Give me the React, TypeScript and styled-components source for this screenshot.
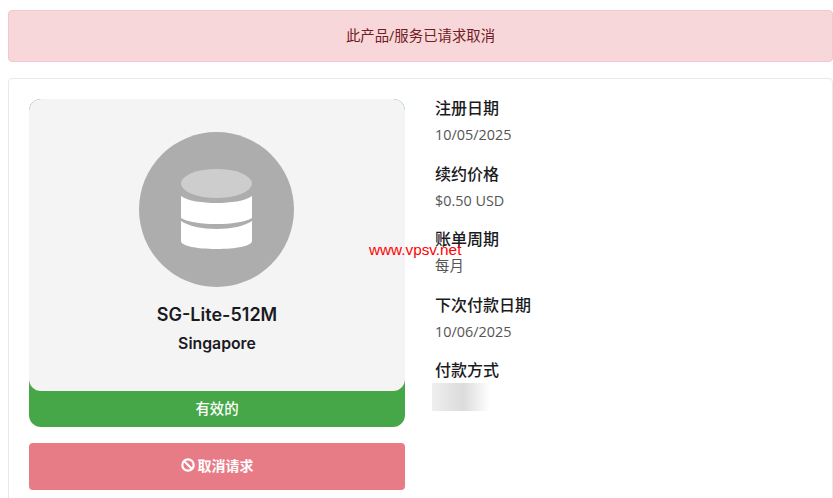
import React from "react";
import styled, { createGlobalStyle } from "styled-components";

const GlobalStyle = createGlobalStyle`
  html, body {
    margin: 0;
    padding: 0;
    background: #fff;
    overflow: hidden;
  }
  body {
    font-family: "Open Sans", "Noto Sans CJK SC", sans-serif;
  }
`;

const Page = styled.div`
  position: relative;
  width: 833px;
  height: 498px;
  padding: 10px 0 0 8px;
  box-sizing: border-box;
  overflow: hidden;
`;

const Alert = styled.div`
  width: 825px;
  height: 52px;
  box-sizing: border-box;
  margin-bottom: 16px;
  padding-bottom: 3px;
  display: flex;
  align-items: center;
  justify-content: center;
  background: #f8d7da;
  border: 1px solid #f5c6cb;
  border-radius: 4px;
  color: #721c24;
  font-size: 14.4px;
`;

const Card = styled.div`
  width: 825px;
  height: 440px;
  box-sizing: border-box;
  padding: 20px;
  display: grid;
  grid-template-columns: 376px 1fr;
  column-gap: 30px;
  align-items: start;
  border: 1px solid #e8e8e8;
  border-radius: 4px;
`;

const Side = styled.div`
  display: flex;
  flex-direction: column;
  gap: 16px;
`;

const ProductPanel = styled.div`
  height: 328px;
  display: flex;
  flex-direction: column;
  background: #46a748;
  border-radius: 12px;
  overflow: hidden;
`;

const ProductBody = styled.div`
  height: 292px;
  flex: none;
  box-sizing: border-box;
  padding-top: 33px;
  display: flex;
  flex-direction: column;
  align-items: center;
  background: #f4f4f4;
  border-radius: 12px;
`;

const IconCircle = styled.div`
  width: 155px;
  height: 155px;
  flex: none;
  display: flex;
  align-items: center;
  justify-content: center;
  border-radius: 50%;
  background: #adadad;
  margin: 0 1px 17px 0;
`;

const ProductName = styled.div`
  font-family: Inter, "Noto Sans CJK SC", sans-serif;
  font-size: 18px;
  font-weight: 600;
  line-height: 22px;
  color: #1a1a22;
  margin-bottom: 7px;
`;

const ProductLocation = styled.div`
  font-family: Inter, "Noto Sans CJK SC", sans-serif;
  font-size: 15.8px;
  font-weight: 600;
  line-height: 22px;
  color: #1a1a22;
`;

const StatusBar = styled.div`
  flex: 1;
  padding-bottom: 3px;
  display: flex;
  align-items: center;
  justify-content: center;
  color: #fff;
  font-size: 14.4px;
  font-weight: 500;
`;

const CancelButton = styled.button`
  height: 47px;
  padding: 0 0 3px;
  display: flex;
  align-items: center;
  justify-content: center;
  gap: 3px;
  border: 0;
  border-radius: 4px;
  background: #e87c86;
  color: #fff;
  font-family: inherit;
  font-size: 14px;
  font-weight: 700;
`;

const Details = styled.div`
  padding-top: 1px;
  display: flex;
  flex-direction: column;
  gap: 17.5px;
`;

const Field = styled.div`
  display: flex;
  flex-direction: column;
  gap: 6px;
`;

const FieldLabel = styled.div`
  height: 16px;
  line-height: 16px;
  font-size: 16px;
  font-weight: 500;
  color: #1a1a22;
`;

const FieldValue = styled.div`
  height: 26px;
  line-height: 26px;
  font-size: 14.4px;
  color: #555;
`;

const BlurredValue = styled.div`
  width: 58px;
  height: 28px;
  margin: -1px 0 0 -3px;
  background: linear-gradient(90deg, #efefef 0%, #e2e2e2 35%, #dcdcdc 55%, #ececec 75%, #fff 100%);
`;

const Watermark = styled.div`
  position: absolute;
  left: 369px;
  top: 241px;
  font-family: "Liberation Sans", Arial, sans-serif;
  font-size: 15.3px;
  line-height: 18px;
  color: #ff0000;
  white-space: nowrap;
`;

const DatabaseSvg = styled.svg`
  margin-top: -1px;
`;

const DatabaseIcon = () => (
  <DatabaseSvg width="71" height="80" viewBox="0 0 71 80">
    <ellipse cx="35.5" cy="14.5" rx="35.5" ry="14.5" fill="#cdcdcd" />
    <path d="M0 27c7 5 21 7 35.5 7S64 32 71 27v22c-7 4-21 6-35.5 6S7 53 0 49z" fill="#fff" />
    <path d="M0 52c7 5 21 8 35.5 8S64 57 71 52v20c0 5-16 8-35.5 8S0 77 0 72z" fill="#fff" />
  </DatabaseSvg>
);

const BanIcon = () => (
  <svg width="14" height="14" viewBox="0 0 14 14" fill="none" stroke="#fff" strokeWidth="2.2">
    <circle cx="7" cy="7" r="5.7" />
    <path d="M3 3l8 8" />
  </svg>
);

const fields = [
  { label: "注册日期", value: "10/05/2025" },
  { label: "续约价格", value: "$0.50 USD" },
  { label: "账单周期", value: "每月" },
  { label: "下次付款日期", value: "10/06/2025" },
];

export default function App() {
  return (
    <Page>
      <GlobalStyle />
      <Alert>此产品/服务已请求取消</Alert>
      <Card>
        <Side>
          <ProductPanel>
            <ProductBody>
              <IconCircle>
                <DatabaseIcon />
              </IconCircle>
              <ProductName>SG-Lite-512M</ProductName>
              <ProductLocation>Singapore</ProductLocation>
            </ProductBody>
            <StatusBar>有效的</StatusBar>
          </ProductPanel>
          <CancelButton>
            <BanIcon />
            取消请求
          </CancelButton>
        </Side>
        <Details>
          {fields.map(field => (
            <Field key={field.label}>
              <FieldLabel>{field.label}</FieldLabel>
              <FieldValue>{field.value}</FieldValue>
            </Field>
          ))}
          <Field>
            <FieldLabel>付款方式</FieldLabel>
            <BlurredValue />
          </Field>
        </Details>
      </Card>
      <Watermark>www.vpsv.net</Watermark>
    </Page>
  );
}
